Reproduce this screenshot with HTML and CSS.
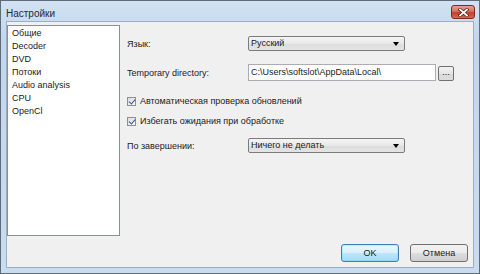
FILE: index.html
```html
<!DOCTYPE html>
<html lang="ru">
<head>
    <meta charset="UTF-8">
    <title>Настройки</title>
    <link rel="stylesheet" href="styles.css">
</head>
<body>
    <div id="window">
        <div id="titlebar">
            <span class="title">Настройки</span>
            <span id="close">
                <svg width="11" height="9" viewBox="0 0 11 9">
                    <path d="M2 1.5 L9 7.5 M9 1.5 L2 7.5" stroke="#5a1a12" stroke-width="3.2" stroke-linecap="square"/>
                    <path d="M2 1.5 L9 7.5 M9 1.5 L2 7.5" stroke="#ffffff" stroke-width="1.8" stroke-linecap="square"/>
                </svg>
            </span>
        </div>
        <div id="client">
            <div id="main">
                <ul id="list">
                    <li>Общие</li>
                    <li>Decoder</li>
                    <li>DVD</li>
                    <li>Потоки</li>
                    <li>Audio analysis</li>
                    <li>CPU</li>
                    <li>OpenCl</li>
                </ul>
                <div id="panel">
                    <div class="row row-lang">
                        <span class="label">Язык:</span>
                        <span class="combo">Русский<i class="arrow"></i></span>
                    </div>
                    <div class="row row-dir">
                        <span class="label">Temporary directory:</span>
                        <span class="edit">C:\Users\softslot\AppData\Local\</span>
                        <span class="browse">...</span>
                    </div>
                    <div class="check check-first"><i class="box"></i>Автоматическая проверка обновлений</div>
                    <div class="check"><i class="box"></i>Избегать ожидания при обработке</div>
                    <div class="row row-end">
                        <span class="label">По завершении:</span>
                        <span class="combo">Ничего не делать<i class="arrow"></i></span>
                    </div>
                </div>
            </div>
            <div id="footer">
                <span class="btn btn-default">OK</span>
                <span class="btn">Отмена</span>
            </div>
        </div>
    </div>
</body>
</html>
```

FILE: styles.css
```css
*{
    margin: 0;
    padding: 0;
    box-sizing: border-box;
}
ul{
    list-style: none;
}
body{
    width: 480px;
    height: 274px;
    overflow: hidden;
    font-family: "Liberation Sans", Arial, sans-serif;
    font-size: 9px;
    color: #1a1a1a;
}
#window{
    width: 480px;
    height: 274px;
    border: 1px solid #5d6b7a;
    background: linear-gradient(#d2e2f3, #c2d6ec 40px, #cadcef);
    padding: 0 5px 5px 5px;
    display: flex;
    flex-direction: column;
}
#titlebar{
    height: 20px;
    display: flex;
    align-items: center;
    justify-content: space-between;
}
.title{
    font-size: 10px;
    color: #1e2a38;
    margin-top: 4px;
}
#close{
    width: 24px;
    height: 14px;
    margin: 2px -1px 0 0;
    border: 1px solid #7f2a1e;
    border-radius: 3px;
    background: linear-gradient(#e8a293, #d4725f 45%, #c2402c 55%, #d46a55);
    display: flex;
    align-items: center;
    justify-content: center;
}
#client{
    flex: 1;
    background: #f0f0f0;
    border: 1px solid #9aaec6;
    display: flex;
    flex-direction: column;
}
#main{
    display: flex;
    padding: 3px 0 0 0;
}
#list{
    width: 113px;
    height: 211px;
    background: #ffffff;
    border: 1px solid #8a8f96;
    padding: 1px 0 0 4px;
}
#list li{
    height: 13px;
    line-height: 13px;
}
#panel{
    margin-left: 7px;
    padding-top: 11px;
    flex: 1;
}
.row{
    display: flex;
    align-items: center;
}
.label{
    width: 121px;
}
.combo{
    width: 157px;
    height: 15px;
    border: 1px solid #7b7b7b;
    border-radius: 2px;
    background: linear-gradient(#f5f5f5, #e8e8e8 50%, #dcdcdc 51%, #e4e4e4);
    padding-left: 2px;
    line-height: 13px;
    position: relative;
}
.arrow{
    position: absolute;
    right: 5px;
    top: 5px;
    border-left: 3px solid transparent;
    border-right: 3px solid transparent;
    border-top: 4px solid #000000;
}
.row-dir{
    margin-top: 13px;
}
.edit{
    width: 188px;
    height: 17px;
    background: #ffffff;
    border: 1px solid #abadb3;
    padding-left: 2px;
    line-height: 15px;
    white-space: nowrap;
    overflow: hidden;
}
.browse{
    width: 16px;
    height: 15px;
    margin-left: 2px;
    margin-top: 2px;
    border: 1px solid #707070;
    border-radius: 2px;
    background: linear-gradient(#f2f2f2, #e6e6e6 50%, #d8d8d8 51%, #dddddd);
    text-align: center;
    line-height: 11px;
}
.check{
    display: flex;
    align-items: center;
    height: 14px;
    margin-top: 6px;
}
.check-first{
    margin-top: 13px;
}
.box{
    width: 9px;
    height: 9px;
    border: 1px solid #8e8f8f;
    background: linear-gradient(135deg, #dcdcdc, #f8f8f8);
    margin-right: 4px;
    position: relative;
}
.box::after{
    content: "";
    position: absolute;
    left: 2px;
    top: 0px;
    width: 3px;
    height: 5px;
    border-right: 1.5px solid #3d55a0;
    border-bottom: 1.5px solid #3d55a0;
    transform: rotate(40deg);
}
.row-end{
    margin-top: 10px;
}
#footer{
    margin-top: auto;
    display: flex;
    justify-content: flex-end;
    gap: 11px;
    padding: 0 5px 5px 0;
}
.btn{
    width: 58px;
    height: 18px;
    border: 1px solid #707070;
    border-radius: 3px;
    background: linear-gradient(#f2f2f2, #ebebeb 50%, #dddddd 51%, #cfcfcf);
    text-align: center;
    line-height: 16px;
}
.btn-default{
    border-color: #3c7fb1;
    background: linear-gradient(#eaf6fd, #d9f0fc 50%, #bee6fd 51%, #a7d9f5);
    box-shadow: inset 0 0 0 1px #48d8fb44;
}
```
